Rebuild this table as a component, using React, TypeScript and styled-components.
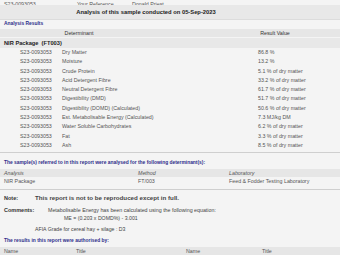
import React from "react";
import styled, { createGlobalStyle } from "styled-components";

const GlobalStyle = createGlobalStyle`
  html, body {
    margin: 0;
    padding: 0;
    background: #f4f4f4;
    font-family: "Liberation Sans", Arial, sans-serif;
    color: #333;
    overflow: hidden;
  }
`;

const Page = styled.div`
  width: 340px;
  display: flex;
  flex-direction: column;
`;

const TopRow = styled.div`
  height: 5px;
  display: grid;
  grid-template-columns: 73px 55px 1fr;
  align-items: end;
  padding-left: 4px;
  font-size: 5.3px;
  line-height: 8px;
  color: #555;
`;

const TitleBar = styled.div`
  height: 15px;
  background: #e8e8e8;
  border-bottom: 1px solid #dcdcdc;
  box-sizing: border-box;
`;

const TitleText = styled.div`
  width: 292px;
  text-align: center;
  font-weight: bold;
  font-size: 5.8px;
  line-height: 14px;
  color: #222;
`;

const SectionTitle = styled.div<{ $top: number }>`
  margin-top: ${(p) => p.$top}px;
  height: 8px;
  line-height: 8px;
  padding-left: 4px;
  font-size: 4.9px;
  font-weight: bold;
  color: #2e2e8a;
  white-space: nowrap;
`;

const ResultsTable = styled.div`
  margin-top: 1px;
  padding-bottom: 2px;
  border-bottom: 1px solid #cfcfcf;
`;

const ResultsHead = styled.div`
  display: grid;
  grid-template-columns: 158px 100px 34px;
  height: 8px;
  line-height: 8px;
  background: #e6e6e6;
  font-size: 5.3px;
  color: #333;
  & > span {
    text-align: center;
    white-space: nowrap;
  }
`;

const PackageRow = styled.div`
  margin-top: 1px;
  height: 10px;
  line-height: 10px;
  padding-left: 4px;
  background: #e8e8e8;
  font-size: 5.7px;
  font-weight: bold;
  color: #222;
  white-space: pre;
`;

const DataRow = styled.div`
  display: grid;
  grid-template-columns: 42px 196px 1fr;
  padding-left: 20px;
  height: 9.3px;
  line-height: 9.3px;
  font-size: 5.3px;
  color: #555;
  white-space: nowrap;
`;

const InfoTable = styled.div`
  margin-top: 2px;
  padding-bottom: 3px;
  border-bottom: 1px solid #cfcfcf;
`;

const InfoRow = styled.div<{ $head?: boolean }>`
  display: grid;
  grid-template-columns: 134px 91px 1fr;
  padding-left: 4px;
  height: ${(p) => (p.$head ? 8 : 9)}px;
  line-height: ${(p) => (p.$head ? 8 : 9)}px;
  background: ${(p) => (p.$head ? "#e6e6e6" : "transparent")};
  font-size: 5.3px;
  font-style: ${(p) => (p.$head ? "italic" : "normal")};
  color: #555;
  white-space: nowrap;
`;

const NoteRow = styled.div<{ $label: number; $top: number; $big?: boolean }>`
  display: grid;
  grid-template-columns: ${(p) => p.$label}px 1fr;
  margin-top: ${(p) => p.$top}px;
  padding-left: 4px;
  height: 8px;
  line-height: 8px;
  font-size: ${(p) => (p.$big ? 6.2 : 5.3)}px;
  font-weight: ${(p) => (p.$big ? "bold" : "normal")};
  color: #444;
  white-space: nowrap;
`;

const Label = styled.span`
  font-size: 5.5px;
  font-weight: bold;
  color: #333;
`;

const Line = styled.div<{ $indent: number; $top?: number }>`
  margin-top: ${(p) => p.$top ?? 0}px;
  padding-left: ${(p) => p.$indent}px;
  height: 8px;
  line-height: 8px;
  font-size: 5.2px;
  color: #444;
  white-space: nowrap;
`;

const SignHead = styled.div`
  margin-top: 2px;
  display: grid;
  grid-template-columns: 72px 110px 76px 1fr;
  padding-left: 4px;
  height: 8px;
  line-height: 8px;
  background: #e6e6e6;
  font-size: 5.3px;
  color: #555;
`;

const results: [string, string][] = [
  ["Dry Matter", "86.8 %"],
  ["Moisture", "13.2 %"],
  ["Crude Protein", "5.1 % of dry matter"],
  ["Acid Detergent Fibre", "33.2 % of dry matter"],
  ["Neutral Detergent Fibre", "61.7 % of dry matter"],
  ["Digestibility (DMD)", "51.7 % of dry matter"],
  ["Digestibility (DOMD) (Calculated)", "50.6 % of dry matter"],
  ["Est. Metabolisable Energy (Calculated)", "7.3 MJ/kg DM"],
  ["Water Soluble Carbohydrates", "6.2 % of dry matter"],
  ["Fat", "3.3 % of dry matter"],
  ["Ash", "8.5 % of dry matter"],
];

const sampleId = "S23-0093053";

export default function App() {
  return (
    <Page>
      <GlobalStyle />
      <TopRow>
        <span>{sampleId}</span>
        <span>Your Reference</span>
        <span>Donald Priest</span>
      </TopRow>
      <TitleBar>
        <TitleText>Analysis of this sample conducted on 05-Sep-2023</TitleText>
      </TitleBar>

      <SectionTitle $top={0}>Analysis Results</SectionTitle>
      <ResultsTable>
        <ResultsHead>
          <span>Determinant</span>
          <span />
          <span>Result Value</span>
        </ResultsHead>
        <PackageRow>{"NIR Package  (FT003)"}</PackageRow>
        {results.map(([name, value]) => (
          <DataRow key={name}>
            <span>{sampleId}</span>
            <span>{name}</span>
            <span>{value}</span>
          </DataRow>
        ))}
      </ResultsTable>

      <SectionTitle $top={6}>
        The sample(s) referred to in this report were analysed for the following determinant(s):
      </SectionTitle>
      <InfoTable>
        <InfoRow $head>
          <span>Analysis</span>
          <span>Method</span>
          <span>Laboratory</span>
        </InfoRow>
        <InfoRow>
          <span>NIR Package</span>
          <span>FT/003</span>
          <span>Feed &amp; Fodder Testing Laboratory</span>
        </InfoRow>
      </InfoTable>

      <NoteRow $label={31} $top={4} $big>
        <Label>Note:</Label>
        <span>This report is not to be reproduced except in full.</span>
      </NoteRow>
      <NoteRow $label={44} $top={4}>
        <Label>Comments:</Label>
        <span>Metabolisable Energy has been calculated using the following equation:</span>
      </NoteRow>
      <Line $indent={64}>ME = (0.203 x DOMD%) - 3.001</Line>
      <Line $indent={35} $top={3}>
        AFIA Grade for cereal hay + silage : D3
      </Line>

      <SectionTitle $top={4}>The results in this report were authorised by:</SectionTitle>
      <SignHead>
        <span>Name</span>
        <span>Title</span>
        <span>Name</span>
        <span>Title</span>
      </SignHead>
    </Page>
  );
}
